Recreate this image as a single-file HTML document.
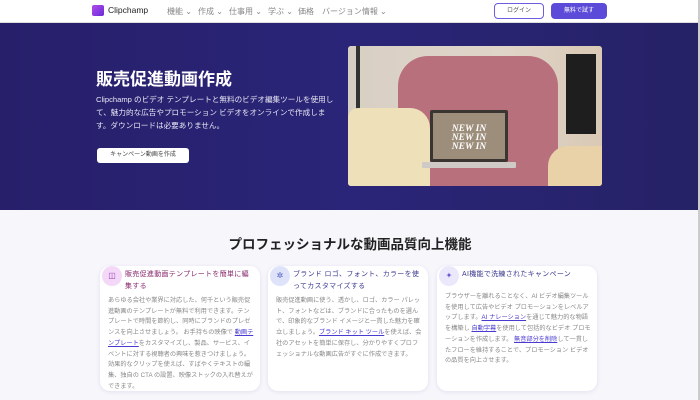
<!DOCTYPE html><html><head><meta charset="utf-8"><style>
*{margin:0;padding:0;box-sizing:border-box}
body{width:700px;height:400px;overflow:hidden;background:#f6f6fb;font-family:"Liberation Sans","Noto Sans CJK JP",sans-serif;position:relative}
.nav{position:absolute;top:0;left:0;width:698px;height:23px;background:#fff;border-bottom:1px solid #ddd}
.logo{position:absolute;left:92px;top:5px;width:12px;height:11px;background:linear-gradient(135deg,#b04ce8,#6a2bd9);border-radius:2px}
.nav .t{position:absolute;top:6px;font-size:8px;color:#888}
.btn1{position:absolute;left:494px;top:3px;width:50px;height:16px;border:1px solid #6b5ce0;border-radius:4px;font-size:6px;color:#555;text-align:center;line-height:14px}
.btn2{position:absolute;left:551px;top:3px;width:56px;height:16px;background:#5b4bd8;border-radius:4px;font-size:6px;color:#fff;text-align:center;line-height:16px}
.hero{position:absolute;top:23px;left:0;width:698px;height:187px;background:linear-gradient(90deg,#271f6a,#2a2578 50%,#262266)}
h1{position:absolute;left:96px;top:65px;font-size:17px;color:#fff;font-weight:bold}
.p{position:absolute;left:96px;top:93px;width:240px;font-size:7.6px;line-height:13px;color:#e8e8f5}
.cta{position:absolute;left:97px;top:148px;width:92px;height:15px;background:#fff;border-radius:3px;font-size:6px;color:#444;text-align:center;line-height:15px}
.img{position:absolute;left:348px;top:46px;width:254px;height:140px;border-radius:3px;overflow:hidden;background:#c5a99a}
.sb{position:absolute;right:0;top:0;width:2px;height:400px;background:#ccc}
h2{position:absolute;left:0;width:700px;text-align:center;top:233px;font-size:13.5px;color:#222}
.card{position:absolute;top:266px;width:160px;height:125px;background:#fff;border-radius:10px;box-shadow:0 1px 4px rgba(80,70,160,.12)}
.ic{position:absolute;left:2px;top:0;width:20px;height:20px;border-radius:50%;font-size:8px;text-align:center;line-height:20px}
.ct{position:absolute;left:25px;top:3px;width:130px;font-size:7px;line-height:12px;letter-spacing:.3px}
.cb{position:absolute;left:8px;width:146px;font-size:6.2px;line-height:10.7px;color:#888}
a{color:#4a3bd0;text-decoration:underline}
</style></head><body>
<div class="nav"><div class="logo"></div>
<span class="t" style="left:108px;top:5px;color:#222;font-size:8.5px">Clipchamp</span>
<span class="t" style="left:167px">機能 ⌄</span><span class="t" style="left:198px">作成 ⌄</span><span class="t" style="left:229px">仕事用 ⌄</span><span class="t" style="left:268px">学ぶ ⌄</span><span class="t" style="left:298px">価格</span><span class="t" style="left:322px">バージョン情報 ⌄</span>
<div class="btn1">ログイン</div><div class="btn2">無料で試す</div></div>
<div class="hero"></div>
<h1>販売促進動画作成</h1>
<div class="p">Clipchamp のビデオ テンプレートと無料のビデオ編集ツールを使用して、魅力的な広告やプロモーション ビデオをオンラインで作成します。ダウンロードは必要ありません。</div>
<div class="cta">キャンペーン動画を作成</div>
<div class="img">
<div style="position:absolute;left:0;top:0;width:254px;height:140px;background:linear-gradient(90deg,#d8cfc4,#e0d5c9 60%,#d9c9b5)"></div>
<div style="position:absolute;left:8px;top:0;width:4px;height:70px;background:#333"></div>
<div style="position:absolute;left:218px;top:8px;width:30px;height:80px;background:#1e1e1e"></div>
<div style="position:absolute;left:50px;top:10px;width:160px;height:130px;background:#b9707d;border-radius:30px 30px 0 0"></div>
<div style="position:absolute;left:0;top:62px;width:82px;height:78px;background:#eee0b8;border-radius:10px 20px 0 0"></div>
<div style="position:absolute;left:200px;top:100px;width:54px;height:40px;background:#ead2a8;border-radius:20px 0 0 0"></div>
<div style="position:absolute;left:82px;top:64px;width:78px;height:52px;background:#3a3530;border-radius:2px"></div>
<div style="position:absolute;left:85px;top:67px;width:72px;height:46px;background:#9d8d7b;color:#fff;font-family:'Liberation Serif',serif;font-style:italic;font-weight:bold;font-size:9.5px;line-height:9px;text-align:center;padding-top:12px">NEW IN<br>NEW IN<br>NEW IN</div>
<div style="position:absolute;left:74px;top:116px;width:94px;height:6px;background:#cfcac5;border-radius:1px"></div>
</div>
<div class="sb"></div>
<h2>プロフェッショナルな動画品質向上機能</h2>
<div class="card" style="left:100px"><div class="ic" style="background:#f3d9f7;color:#9b3db8">◫</div><div class="ct" style="color:#8a2a6e">販売促進動画テンプレートを簡単に編集する</div>
<div class="cb" style="top:30px">あらゆる会社や業界に対応した、何千という販売促進動画のテンプレートが無料で利用できます。テンプレートで時間を節約し、同時にブランドのプレゼンスを向上させましょう。 お手持ちの映像で <a>動画テンプレート</a>をカスタマイズし、製品、サービス、イベントに対する視聴者の興味を惹きつけましょう。 効果的なクリップを使えば、すばやくテキストの編集、独自の CTA の設置、映像ストックの入れ替えができます。</div></div>
<div class="card" style="left:268px"><div class="ic" style="background:#dfe3fa;color:#4a5bc0">✲</div><div class="ct" style="color:#3b3a90">ブランド ロゴ、フォント、カラーを使ってカスタマイズする</div>
<div class="cb" style="top:30px">販売促進動画に使う、透かし、ロゴ、カラー パレット、フォントなどは、ブランドに合ったものを選んで、印象的なブランド イメージと一貫した魅力を確立しましょう。<a>ブランド キット ツール</a>を使えば、会社のアセットを簡単に保存し、分かりやすくプロフェッショナルな動画広告がすぐに作成できます。</div></div>
<div class="card" style="left:437px"><div class="ic" style="background:#ece8fb;color:#6a5ad0">✦</div><div class="ct" style="color:#3b3a90">AI機能で洗練されたキャンペーン</div>
<div class="cb" style="top:26px">ブラウザーを離れることなく、AI ビデオ編集ツールを使用して広告やビデオ プロモーションをレベルアップします。<a>AI ナレーション</a>を通じて魅力的な物語を構築し <a>自動字幕</a>を使用して包括的なビデオ プロモーションを作成します。 <a>無音部分を削除</a>して一貫したフローを維持することで、プロモーション ビデオの品質を向上させます。</div></div>
</body></html>
